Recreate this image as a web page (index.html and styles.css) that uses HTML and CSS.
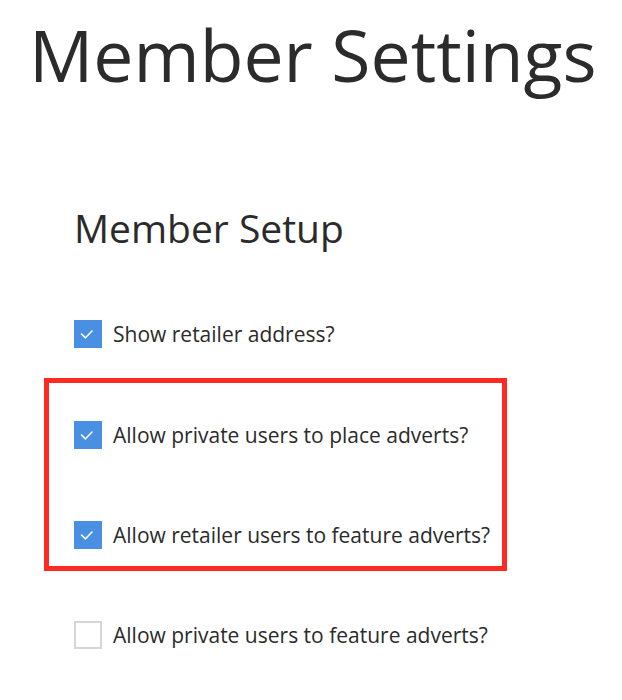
FILE: index.html
```html
<!DOCTYPE html>
<html lang="en">
<head>
    <meta charset="UTF-8">
    <meta name="viewport" content="width=device-width, initial-scale=1.0">
    <title>Member Settings</title>
    <link rel="stylesheet" href="styles.css">
</head>
<body>

<h1 class="page-title">Member Settings</h1>

<!-- Member setup options -->
<div class="setup">
    <h2 class="setup-title">Member Setup</h2>

    <label class="option first">
        <span class="box checked"><svg viewBox="0 0 28 28"><path d="M7.5 14 L11.5 17.8 L18 11"/></svg></span>
        <span class="option-text">Show retailer address?</span>
    </label>

    <!-- highlighted group -->
    <div class="highlight">
        <label class="option">
            <span class="box checked"><svg viewBox="0 0 28 28"><path d="M7.5 14 L11.5 17.8 L18 11"/></svg></span>
            <span class="option-text">Allow private users to place adverts?</span>
        </label>
        <label class="option">
            <span class="box checked"><svg viewBox="0 0 28 28"><path d="M7.5 14 L11.5 17.8 L18 11"/></svg></span>
            <span class="option-text">Allow retailer users to feature adverts?</span>
        </label>
    </div>

    <label class="option last">
        <span class="box"></span>
        <span class="option-text">Allow private users to feature adverts?</span>
    </label>
</div>

</body>
</html>
```

FILE: styles.css
```css
body {
    margin: 0;
    background-color: #fff;
    color: #2b2b2b;
    font-family: "Open Sans", "Liberation Sans", sans-serif;
}
.page-title {
    margin: 0;
    padding: 19px 0 0 29px;
    font-size: 71.5px;
    font-weight: 400;
    line-height: 72px;
}
.setup {
    padding-left: 74px;
}
.setup-title {
    margin: 0;
    padding-top: 118px;
    font-size: 39px;
    font-weight: 400;
    line-height: 37px;
}
.option {
    display: flex;
    align-items: center;
    gap: 11px;
    height: 28px;
    font-size: 21px;
}
.option.first {
    margin-top: 74px;
}
.option.last {
    margin-top: 50px;
}
.box {
    width: 28px;
    height: 28px;
    box-sizing: border-box;
    border: 2px solid #d6d6d6;
    background-color: #fff;
}
.box.checked {
    border: none;
    background-color: #4a90e2;
}
.box svg {
    display: block;
    width: 28px;
    height: 28px;
    fill: none;
    stroke: #fff;
    stroke-width: 1.6;
    stroke-linecap: round;
    stroke-linejoin: round;
}
/* red box round the two advert options */
.highlight {
    box-sizing: border-box;
    width: 463px;
    margin: 30px 0 0 -30px;
    padding: 38px 0 17px 25px;
    border: 5px solid #ff2b22;
    display: flex;
    flex-direction: column;
    gap: 72px;
}
```
